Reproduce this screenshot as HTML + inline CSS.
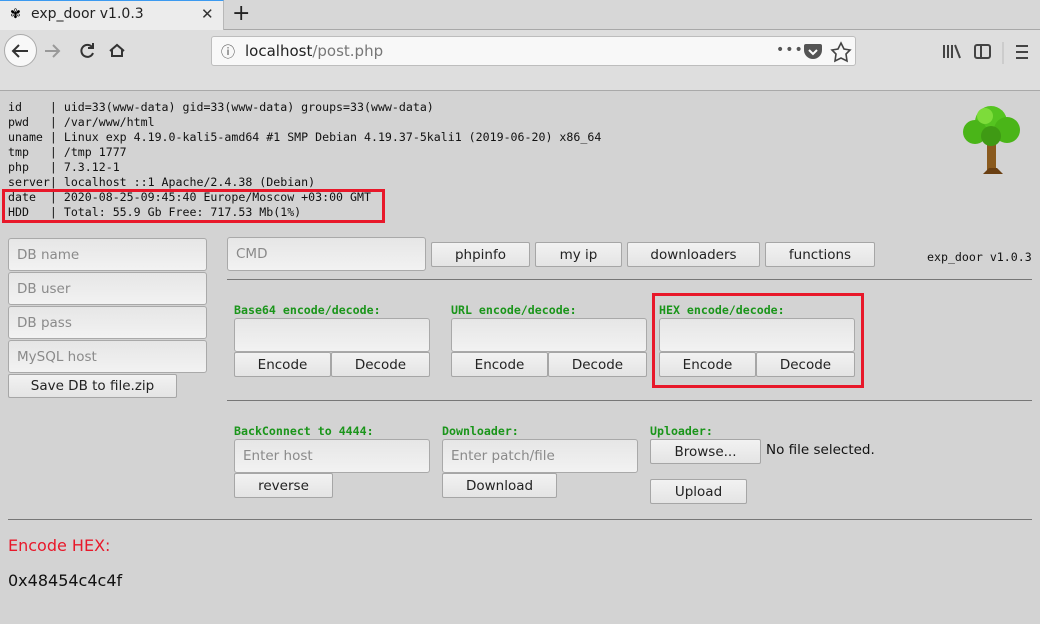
<!DOCTYPE html>
<html><head><meta charset="utf-8"><style>
*{box-sizing:border-box;margin:0;padding:0}
body{width:1040px;height:624px;overflow:hidden;background:#d3d3d3;font-family:"DejaVu Sans",sans-serif;position:relative}
.a{position:absolute}
.tabbar{left:0;top:0;width:1040px;height:30px;background:#d7d7d7;border-bottom:1px solid #a8a8a8}
.tab{left:0;top:0;width:224px;height:31px;background:#ececec;border-top:1px solid #3c9af0;border-right:1px solid #b8b8b8}
.tool{left:0;top:30px;width:1040px;height:61px;background:#dedede;border-bottom:1px solid #a9a9a9}
.url{left:211px;top:36px;width:645px;height:30px;background:#f8f8f8;border:1px solid #bdbdbd;border-radius:3px}
pre{font-family:"DejaVu Sans Mono",monospace;font-size:11.6px;line-height:15px;color:#111}
.in{position:absolute;background:linear-gradient(#e6e6e6,#f2f2f2);border:1px solid #a9a9a9;border-radius:3px;font-size:13.5px;color:#8a8a8a;padding-left:8px;display:flex;align-items:center}
.bt{position:absolute;background:linear-gradient(#f2f2f2,#e4e4e4);border:1px solid #a6a6a6;border-radius:2px;font-size:13.5px;color:#222;display:flex;align-items:center;justify-content:center}
.lb{position:absolute;font-family:"DejaVu Sans Mono",monospace;font-size:11.6px;font-weight:bold;color:#1a951a}
.hr{position:absolute;height:1px;background:#777}
.rb{position:absolute;border:3px solid #e8182a}
</style></head><body>
<div class="a tabbar"></div>
<div class="a tab"></div>
<div class="a" style="left:10px;top:7px;font-size:13px">✾</div>
<div class="a" style="left:31px;top:6px;font-size:14px;color:#222">exp_door v1.0.3</div>
<div class="a" style="left:201px;top:5px;font-size:15px;color:#333">✕</div>
<div class="a" style="left:232px;top:1px;font-size:22px;color:#222">+</div>
<div class="a tool"></div>
<div class="a" style="left:4px;top:34px;width:33px;height:33px;border-radius:50%;background:#f8f8f8;border:1px solid #aaa"></div>
<svg class="a" style="left:0;top:30px" width="140" height="40"><g fill="none" stroke="#333" stroke-width="2"><path d="M28 21H13M19 15l-6 6 6 6"/><path d="M45 21h14M53 15l6 6-6 6" stroke="#999"/><path d="M92 17a6 6 0 1 0 1 6M93 13v5h-5"/><path d="M110 21l7-6 7 6M112 19v7h10v-7"/></g></svg>
<div class="a url"></div>
<div class="a" style="left:221px;top:42px;font-size:14px;color:#444">ⓘ</div>
<div class="a" style="left:245px;top:42px;font-size:15px;color:#222">localhost<span style="color:#777">/post.php</span></div>
<div class="a" style="left:776px;top:42px;font-size:14px;color:#555;letter-spacing:1px">•••</div>
<svg class="a" style="left:800px;top:40px" width="60" height="24"><path d="M6 4h14a2 2 0 0 1 2 2v4a9 9 0 0 1-18 0V6a2 2 0 0 1 2-2z" fill="#555"/><path d="M9 10l4 4 4-4" stroke="#fff" stroke-width="2" fill="none"/><path d="M41 3l3 6 6 1-4 4 1 7-6-3-6 3 1-7-4-4 6-1z" fill="none" stroke="#444" stroke-width="1.6"/></svg>
<svg class="a" style="left:940px;top:40px" width="100" height="24"><g stroke="#444" stroke-width="2" fill="none"><path d="M4 5v13M8 5v13M12 5v13M15 5l5 13"/><rect x="35" y="5" width="15" height="13" rx="2"/><path d="M41 5v13"/><path d="M76 6h12M76 12h12M76 18h12"/></g><path d="M63 2v24" stroke="#bbb"/></svg>
<pre class="a" style="left:8px;top:100px">id    | uid=33(www-data) gid=33(www-data) groups=33(www-data)
pwd   | /var/www/html
uname | Linux exp 4.19.0-kali5-amd64 #1 SMP Debian 4.19.37-5kali1 (2019-06-20) x86_64
tmp   | /tmp 1777
php   | 7.3.12-1
server| localhost ::1 Apache/2.4.38 (Debian)
date  | 2020-08-25-09:45:40 Europe/Moscow +03:00 GMT
HDD   | Total: 55.9 Gb Free: 717.53 Mb(1%)</pre>
<div class="rb" style="left:2px;top:189px;width:383px;height:34px"></div>
<svg class="a" style="left:955px;top:100px" width="72" height="76"><rect x="32" y="36" width="9" height="36" fill="#8a5a1e"/><path d="M28 74h20l-6-6h-8z" fill="#6a3f12"/><circle cx="36" cy="22" r="16" fill="#55c420"/><circle cx="20" cy="32" r="12" fill="#4ab518"/><circle cx="52" cy="30" r="13" fill="#4ab518"/><circle cx="36" cy="36" r="10" fill="#3f9a14"/><circle cx="30" cy="16" r="8" fill="#7ddc3a"/></svg>
<div class="in" style="left:8px;top:238px;width:199px;height:33px">DB name</div>
<div class="in" style="left:8px;top:272px;width:199px;height:33px">DB user</div>
<div class="in" style="left:8px;top:306px;width:199px;height:33px">DB pass</div>
<div class="in" style="left:8px;top:340px;width:199px;height:33px">MySQL host</div>
<div class="bt" style="left:8px;top:374px;width:169px;height:24px">Save DB to file.zip</div>
<div class="in" style="left:227px;top:237px;width:199px;height:34px">CMD</div>
<div class="bt" style="left:431px;top:242px;width:99px;height:25px">phpinfo</div>
<div class="bt" style="left:535px;top:242px;width:87px;height:25px">my ip</div>
<div class="bt" style="left:627px;top:242px;width:133px;height:25px">downloaders</div>
<div class="bt" style="left:765px;top:242px;width:110px;height:25px">functions</div>
<pre class="a" style="left:927px;top:250px">exp_door v1.0.3</pre>
<div class="hr" style="left:227px;top:279px;width:805px"></div>
<div class="lb" style="left:234px;top:303px">Base64 encode/decode:</div>
<div class="in" style="left:234px;top:318px;width:196px;height:34px"></div>
<div class="bt" style="left:234px;top:352px;width:97px;height:25px">Encode</div>
<div class="bt" style="left:331px;top:352px;width:99px;height:25px">Decode</div>
<div class="lb" style="left:451px;top:303px">URL encode/decode:</div>
<div class="in" style="left:451px;top:318px;width:196px;height:34px"></div>
<div class="bt" style="left:451px;top:352px;width:97px;height:25px">Encode</div>
<div class="bt" style="left:548px;top:352px;width:99px;height:25px">Decode</div>
<div class="lb" style="left:659px;top:303px">HEX encode/decode:</div>
<div class="in" style="left:659px;top:318px;width:196px;height:34px"></div>
<div class="bt" style="left:659px;top:352px;width:97px;height:25px">Encode</div>
<div class="bt" style="left:756px;top:352px;width:99px;height:25px">Decode</div>
<div class="rb" style="left:652px;top:293px;width:212px;height:95px"></div>
<div class="hr" style="left:227px;top:400px;width:805px"></div>
<div class="lb" style="left:234px;top:424px">BackConnect to 4444:</div>
<div class="in" style="left:234px;top:439px;width:196px;height:34px">Enter host</div>
<div class="bt" style="left:234px;top:473px;width:99px;height:25px">reverse</div>
<div class="lb" style="left:442px;top:424px">Downloader:</div>
<div class="in" style="left:442px;top:439px;width:196px;height:34px">Enter patch/file</div>
<div class="bt" style="left:442px;top:473px;width:115px;height:25px">Download</div>
<div class="lb" style="left:650px;top:424px">Uploader:</div>
<div class="bt" style="left:650px;top:439px;width:111px;height:25px">Browse...</div>
<div class="a" style="left:766px;top:442px;font-size:13.5px;color:#111">No file selected.</div>
<div class="bt" style="left:650px;top:479px;width:97px;height:25px">Upload</div>
<div class="hr" style="left:8px;top:519px;width:1024px"></div>
<div class="a" style="left:8px;top:536px;font-size:16px;color:#e8182a">Encode HEX:</div>
<div class="a" style="left:8px;top:571px;font-size:16px;color:#111">0x48454c4c4f</div>
</body></html>
